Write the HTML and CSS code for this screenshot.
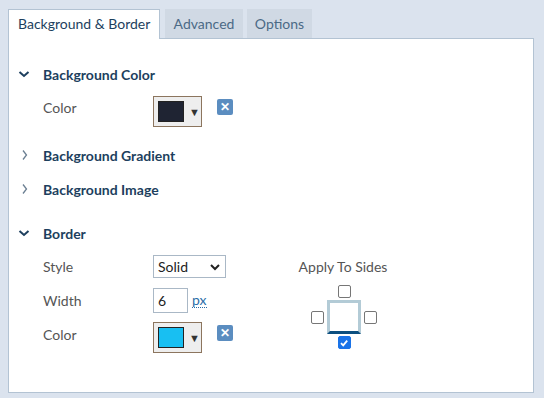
FILE: index.html
```html
<!DOCTYPE html>
<html lang="en">
<head>
    <meta charset="UTF-8">
    <title>Background &amp; Border</title>
    <link rel="stylesheet" href="styles.css">
</head>
<body>
    <div class="tabs">
        <div class="tab active">Background &amp; Border</div>
        <div class="tab">Advanced</div>
        <div class="tab">Options</div>
    </div>

    <div class="panel">
        <div class="section">
            <div class="section-head">
                <svg class="chev" width="12" height="12" viewBox="0 0 12 12"><path d="M1.5 4 L6 8 L10.5 4" fill="none" stroke="#1d3f5e" stroke-width="2"/></svg>
                <span>Background Color</span>
            </div>
            <div class="row row-color">
                <label>Color</label>
                <button class="swatch"><span class="swatch-fill dark"></span><span class="caret">▼</span></button>
                <span class="clear">✕</span>
            </div>
        </div>

        <div class="section collapsed gradient">
            <div class="section-head">
                <svg class="chev" width="12" height="12" viewBox="0 0 12 12"><path d="M5 1.5 L8.5 6 L5 10.5" fill="none" stroke="#6b7f92" stroke-width="1.3"/></svg>
                <span>Background Gradient</span>
            </div>
        </div>

        <div class="section collapsed">
            <div class="section-head">
                <svg class="chev" width="12" height="12" viewBox="0 0 12 12"><path d="M5 1.5 L8.5 6 L5 10.5" fill="none" stroke="#6b7f92" stroke-width="1.3"/></svg>
                <span>Background Image</span>
            </div>
        </div>

        <div class="section border-section">
            <div class="section-head">
                <svg class="chev" width="12" height="12" viewBox="0 0 12 12"><path d="M1.5 4 L6 8 L10.5 4" fill="none" stroke="#1d3f5e" stroke-width="2"/></svg>
                <span>Border</span>
            </div>
            <div class="border-body">
                <div class="fields">
                    <div class="row row-style">
                        <label>Style</label>
                        <div class="select">Solid
                            <svg width="10" height="8" viewBox="0 0 10 8"><path d="M1 2 L5 6 L9 2" fill="none" stroke="#222" stroke-width="2"/></svg>
                        </div>
                    </div>
                    <div class="row row-width">
                        <label>Width</label>
                        <div class="num">6</div>
                        <span class="unit">px</span>
                    </div>
                    <div class="row row-color">
                        <label>Color</label>
                        <button class="swatch"><span class="swatch-fill cyan"></span><span class="caret">▼</span></button>
                        <span class="clear">✕</span>
                    </div>
                </div>
                <div class="sides">
                    <div class="sides-title">Apply To Sides</div>
                    <div class="sides-grid">
                        <span class="cb top"></span>
                        <span class="cb left"></span>
                        <span class="box"></span>
                        <span class="cb right"></span>
                        <span class="cb bottom checked">
                            <svg width="10" height="10" viewBox="0 0 10 10"><path d="M2 5.2 L4.2 7.4 L8.2 2.6" fill="none" stroke="#fff" stroke-width="1.8"/></svg>
                        </span>
                    </div>
                </div>
            </div>
        </div>
    </div>
</body>
</html>
```

FILE: styles.css
```css
* {
    margin: 0;
    padding: 0;
    box-sizing: border-box;
}

body {
    font-family: Lato, "Open Sans", sans-serif;
    font-size: 14px;
    background-color: #dbe3ee;
    color: #555;
    padding: 9px 10px 0 8px;
    height: 398px;
}

/* Tabs */
.tabs {
    display: flex;
    height: 29px;
    position: relative;
    z-index: 1;
}

.tab {
    height: 29px;
    line-height: 29px;
    padding: 0 8px;
    margin-right: 4px;
    background: #d0d9e4;
    color: #4b6a86;
}

.tab.active {
    background: #fff;
    color: #1d3f5e;
    border: 1px solid #b3c3d3;
    border-bottom: none;
    height: 30px;
    width: 152px;
    margin-right: 5px;
    padding: 0 0 0 9px;
    line-height: 28px;
}

.tab + .tab {
    width: 78px;
    text-align: center;
    padding: 0;
}

.tab + .tab + .tab {
    width: 65px;
}

/* Panel */
.panel {
    background: #fff;
    border: 1px solid #b3c3d3;
    height: 355px;
    padding: 18px 0 0 9px;
}

.section-head {
    display: flex;
    align-items: center;
    height: 34px;
    font-weight: bold;
    color: #1d3f5e;
}

.chev {
    margin-right: 13px;
}

.gradient {
    margin-top: 12px;
}

.border-section {
    margin-top: 10px;
}

.row {
    display: flex;
    align-items: center;
    padding-left: 25px;
}

.row label {
    width: 110px;
}

.row-color {
    height: 30px;
    margin-top: 5px;
    align-items: flex-start;
}

.row-color label {
    line-height: 18px;
    padding-top: 3px;
}

.swatch {
    display: flex;
    align-items: center;
    width: 49px;
    height: 31px;
    border: 1px solid #8c755e;
    background: #eee;
    padding-left: 4px;
    cursor: pointer;
}

.swatch-fill {
    width: 26px;
    height: 21px;
    border: 1px solid #222;
}

.swatch-fill.dark {
    background: #1f2433;
}

.swatch-fill.cyan {
    background: #18bff2;
}

.caret {
    font-size: 11px;
    color: #333;
    margin-left: 5px;
}

.clear {
    width: 16px;
    height: 16px;
    margin-left: 15px;
    margin-top: 3px;
    background: #5b8dc0;
    border-radius: 2px;
    color: #fff;
    font-size: 12px;
    font-weight: bold;
    line-height: 16px;
    text-align: center;
}

/* Border section */
.border-body {
    display: flex;
    margin-top: 5px;
}

.fields {
    width: 278px;
}

.row-style {
    height: 23px;
}

.select {
    display: flex;
    align-items: center;
    justify-content: space-between;
    width: 73px;
    height: 23px;
    border: 1px solid #aab8c6;
    padding: 0 5px 0 4px;
    color: #222;
}

.row-width {
    height: 25px;
    margin-top: 10px;
}

.num {
    width: 35px;
    height: 25px;
    border: 1px solid #aab8c6;
    padding-left: 4px;
    line-height: 23px;
    color: #222;
}

.unit {
    margin-left: 4px;
    color: #2b6ea8;
    border-bottom: 1px dotted #2b6ea8;
    line-height: 14px;
}

.row-width + .row-color {
    margin-top: 9px;
}

.row-width + .row-color label {
    padding-top: 4px;
}

.sides {
    width: 94px;
    text-align: center;
    padding-top: 3px;
}

.sides-title {
    line-height: 18px;
}

.sides-grid {
    display: grid;
    grid-template-columns: 13px 34px 13px;
    grid-template-rows: 13px 34px 13px;
    column-gap: 3px;
    row-gap: 2px;
    justify-content: center;
    margin-top: 9px;
    margin-left: 2px;
}

.cb {
    width: 13px;
    height: 13px;
    border: 1px solid #767676;
    border-radius: 2px;
    background: #fff;
}

.cb.top {
    grid-column: 2;
    grid-row: 1;
    justify-self: center;
}

.cb.left {
    grid-column: 1;
    grid-row: 2;
    align-self: center;
}

.cb.right {
    grid-column: 3;
    grid-row: 2;
    align-self: center;
}

.cb.bottom {
    grid-column: 2;
    grid-row: 3;
    justify-self: center;
}

.cb.checked {
    background: #1a73e8;
    border-color: #1a73e8;
    display: flex;
    align-items: center;
    justify-content: center;
}

.box {
    grid-column: 2;
    grid-row: 2;
    border: 3px solid #b3cbd6;
    border-bottom-color: #0c4f80;
}
```
